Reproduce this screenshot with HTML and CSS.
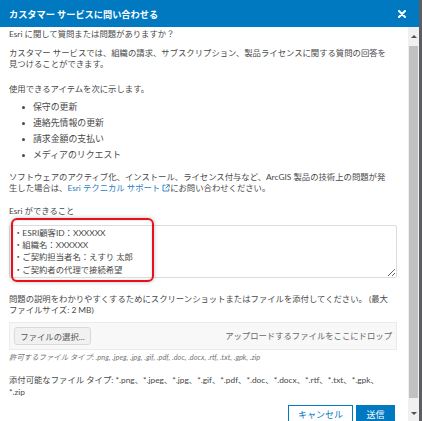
FILE: index.html
```html
<!DOCTYPE html>
<html lang="ja">
<head>
<meta charset="utf-8">
<title>カスタマー サービスに問い合わせる</title>
<link rel="stylesheet" href="styles.css">
</head>
<body>
<div class="dialog">
  <header class="titlebar">
    <h1 class="title">カスタマー サービスに問い合わせる</h1>
    <svg class="close" width="8" height="8" viewBox="0 0 8 8"><path d="M1 1 L7 7 M7 1 L1 7" stroke="#fff" stroke-width="2" stroke-linecap="round"/></svg>
  </header>
  <div class="main">
    <div class="content">
      <p class="p1">Esri に関して質問または問題がありますか？</p>
      <p class="p2 lines">カスタマー サービスでは、組織の請求、サブスクリプション、製品ライセンスに関する質問の回答を<br>見つけることができます。</p>
      <p class="p3">使用できるアイテムを次に示します。</p>
      <ul class="items">
        <li>保守の更新</li>
        <li>連絡先情報の更新</li>
        <li>請求金額の支払い</li>
        <li>メディアのリクエスト</li>
      </ul>
      <p class="p4 lines">ソフトウェアのアクティブ化、インストール、ライセンス付与など、ArcGIS 製品の技術上の問題が発<br>生した場合は、<a class="link" href="#">Esri テクニカル サポート<svg class="ext" width="8" height="8" viewBox="0 0 8 8"><path d="M3.5 1.2 H1 V7 H6.8 V4.5" fill="none" stroke="#2a7dc0" stroke-width="0.9"/><path d="M4.5 0.8 H7.2 V3.5 M7.2 0.8 L3.6 4.4" fill="none" stroke="#2a7dc0" stroke-width="0.9"/></svg></a>にお問い合わせください。</p>
      <label class="label" for="msg">Esri ができること</label>
      <div class="area-wrap">
        <textarea id="msg" class="area" readonly>・ESRI顧客ID：XXXXXX
・組織名：XXXXXX
・ご契約担当者名：えすり 太郎
・ご契約者の代理で接続希望</textarea>
        <div class="highlight"></div>
      </div>
      <p class="p5 lines">問題の説明をわかりやすくするためにスクリーンショットまたはファイルを添付してください。 (最大<br>ファイルサイズ: 2 MB)</p>
      <div class="dropzone">
        <button class="pick" type="button">ファイルの選択...</button>
        <span class="drop">アップロードするファイルをここにドロップ</span>
      </div>
      <p class="allowed">許可するファイル タイプ: .png, .jpeg, .jpg, .gif, .pdf, .doc, .docx, .rtf, .txt, .gpk, .zip</p>
      <p class="p6 lines">添付可能なファイル タイプ: *.png、*.jpeg、*.jpg、*.gif、*.pdf、*.doc、*.docx、*.rtf、*.txt、*.gpk、<br>*.zip</p>
      <div class="actions">
        <button class="btn cancel" type="button">キャンセル</button>
        <button class="btn send" type="button">送信</button>
      </div>
    </div>
    <div class="scrollbar">
      <div class="sb-btn"><span class="arrow up"></span></div>
      <div class="sb-track"><div class="thumb"></div></div>
      <div class="sb-btn down-btn"><span class="arrow down"></span></div>
    </div>
  </div>
</div>
</body>
</html>
```
FILE: styles.css
```css
* { box-sizing: border-box; }
html, body { margin: 0; padding: 0; }
body {
  width: 422px;
  height: 421px;
  overflow: hidden;
  background: #5b5f63;
  font-family: "Lato", "Noto Sans CJK JP", sans-serif;
  color: #484848;
}
.dialog {
  width: 419px;
  height: 421px;
  display: flex;
  flex-direction: column;
  background: #fff;
}
.titlebar {
  height: 27px;
  flex: none;
  background: #0079c1;
  display: flex;
  align-items: center;
  justify-content: space-between;
  padding: 0 13px 0 9px;
}
.title {
  margin: 0;
  font-size: 9.2px;
  font-weight: 700;
  color: #fff;
  line-height: 12px;
  font-family: "Noto Sans CJK JP", sans-serif;
}
.close { display: block; }
.main {
  flex: 1;
  display: flex;
  overflow: hidden;
}
.content {
  flex: 1;
  padding: 2px 11px 0 9px;
  font-size: 8.35px;
  line-height: 11px;
}
p { margin: 0; }
.lines { white-space: nowrap; }
.p2 { margin-top: 8px; }
.p3 { margin-top: 14px; }
.items {
  list-style: none;
  margin: 4px 0 0;
  padding: 0;
  font-size: 8.9px;
  line-height: 16px;
}
.items li {
  display: flex;
  align-items: center;
}
.items li::before {
  content: "";
  width: 3px;
  height: 3px;
  border-radius: 50%;
  background: #484848;
  margin: 0 8px 0 13px;
}
.p4 { margin-top: 9px; }
.link {
  color: #2a7dc0;
  text-decoration: none;
}
.ext { margin-left: 2px; vertical-align: -1px; }
.label {
  display: block;
  margin-top: 12px;
}
.area-wrap {
  position: relative;
  margin-top: 8px;
}
.area {
  display: block;
  width: 388px;
  height: 53px;
  margin: 0;
  border: 1px solid #dcdcdc;
  border-radius: 2px;
  padding: 1px 4px 0;
  font-family: "Lato", "Noto Sans CJK JP", sans-serif;
  font-size: 8.35px;
  line-height: 12.2px;
  color: #484848;
  resize: both;
  overflow: hidden;
  outline: none;
}
.highlight {
  position: absolute;
  left: 2px;
  top: -7px;
  width: 143px;
  height: 64px;
  border: 2px solid #e8101a;
  border-radius: 6px;
  box-shadow: 0 0 4px rgba(0,0,0,0.25), inset 0 0 3px rgba(0,0,0,0.15);
  pointer-events: none;
}
.p5 { margin-top: 16px; }
.dropzone {
  margin-top: 6px;
  height: 28px;
  background: #f8f8f8;
  border: 1px solid #ebebeb;
  display: flex;
  align-items: center;
  justify-content: space-between;
  padding: 0 4px;
}
.pick {
  height: 18px;
  width: 77px;
  padding: 0;
  background: #f1f1f1;
  border: 1px solid #dadada;
  border-radius: 3px;
  font-family: "Lato", "Noto Sans CJK JP", sans-serif;
  font-size: 8.35px;
  color: #555;
}
.drop { color: #666; }
.allowed {
  margin-top: 2px;
  font-size: 7.4px;
  font-style: italic;
  color: #777;
}
.p6 { margin-top: 12px; line-height: 11.5px; }
.actions {
  display: flex;
  justify-content: flex-end;
  gap: 3px;
  margin-top: 7px;
  padding-right: 2px;
}
.btn {
  height: 20px;
  padding: 0;
  font-family: "Lato", "Noto Sans CJK JP", sans-serif;
  font-size: 9px;
  line-height: 18px;
  border: 1px solid #0079c1;
}
.cancel { width: 65px; background: #fff; color: #0079c1; }
.send { width: 39px; background: #0079c1; color: #fff; }
.scrollbar {
  width: 11px;
  flex: none;
  background: #f0f0f0;
  display: flex;
  flex-direction: column;
}
.sb-btn {
  height: 16px;
  display: flex;
  align-items: center;
  justify-content: center;
  padding-top: 2px;
}
.down-btn { height: 16px; padding-top: 0; }
.sb-track {
  flex: 1;
  padding: 3px 1px 7px;
  display: flex;
}
.thumb {
  flex: 1;
  background: #c1c1c1;
}
.arrow {
  width: 0;
  height: 0;
  border-left: 3px solid transparent;
  border-right: 3px solid transparent;
}
.arrow.up { border-bottom: 3px solid #505050; }
.arrow.down { border-top: 3px solid #505050; }
```
